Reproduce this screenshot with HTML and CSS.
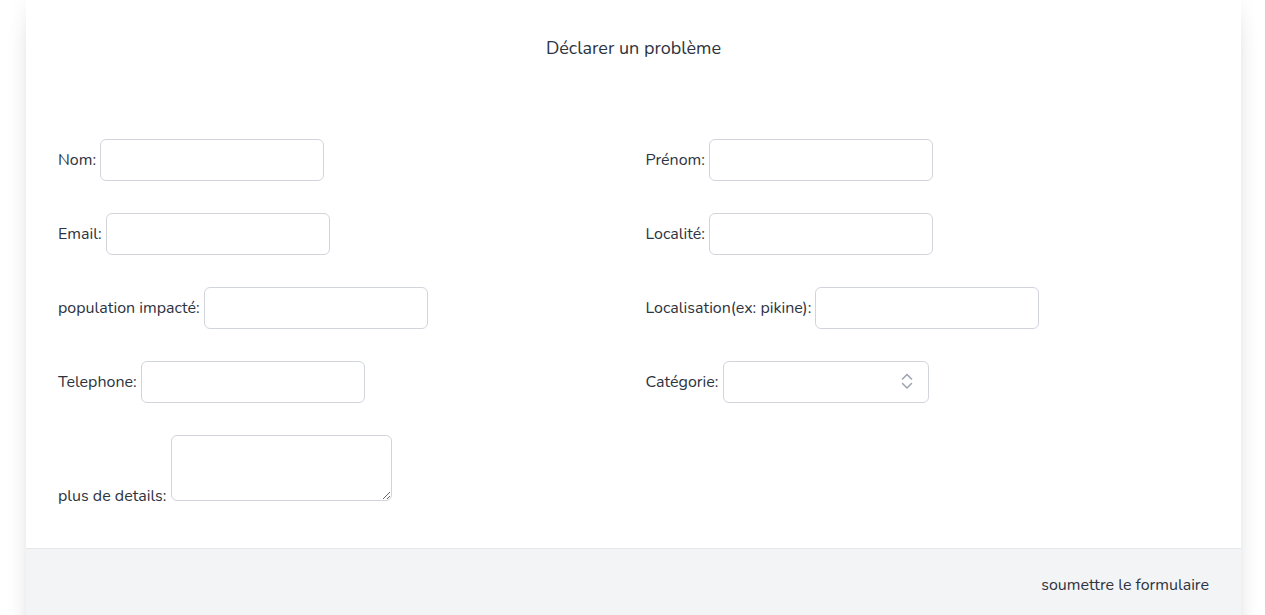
FILE: index.html
```html
<!DOCTYPE html>
<html lang="fr">
<head>
<meta charset="utf-8">
<link rel="stylesheet" href="styles.css">
</head>
<body>
<div class="card">
  <div class="card-body">
    <h1 class="title">Déclarer un problème</h1>
    <form class="form-grid">
      <div class="field"><label>Nom:</label> <input class="input" type="text"></div>
      <div class="field"><label>Prénom:</label> <input class="input" type="text"></div>
      <div class="field"><label>Email:</label> <input class="input" type="text"></div>
      <div class="field"><label>Localité:</label> <input class="input" type="text"></div>
      <div class="field"><label>population impacté:</label> <input class="input" type="text"></div>
      <div class="field"><label>Localisation(ex: pikine):</label> <input class="input" type="text"></div>
      <div class="field"><label>Telephone:</label> <input class="input" type="text"></div>
      <div class="field"><label>Catégorie:</label> <span class="select-wrap"><select class="select"><option></option></select><svg class="select-icon" width="20" height="20" viewBox="0 0 20 20" fill="none"><path d="M5.5 8l4.5-4.5 4.5 4.5M5.5 12.5l4.5 4.5 4.5-4.5" stroke="#9ca3af" stroke-width="1.5" stroke-linecap="round" stroke-linejoin="round"/></svg></span></div>
      <div class="field"><label>plus de details:</label> <textarea class="textarea"></textarea></div>
    </form>
  </div>
  <div class="card-footer">
    <span class="submit">soumettre le formulaire</span>
  </div>
</div>
</body>
</html>
```
FILE: styles.css
```css
* { box-sizing: border-box; }
html, body { margin: 0; padding: 0; background: #fff; }
body {
  font-family: "Nunito", "Noto Sans", sans-serif;
  font-size: 16px;
  color: #2d3340;
  overflow: hidden;
}
.card {
  margin: 0 24px 0 26px;
  background: #fff;
  box-shadow: 0 20px 25px -5px rgba(0,0,0,0.1), 0 10px 10px -5px rgba(0,0,0,0.04), 0 0 18px rgba(0,0,0,0.05);
}
.card-body {
  padding: 34px 32px 40px;
}
.title {
  margin: 0 0 77px;
  text-align: center;
  font-size: 18px;
  font-weight: 400;
  line-height: 28px;
  color: #2d3340;
}
.form-grid {
  display: grid;
  grid-template-columns: 1fr 1fr;
  column-gap: 24px;
  row-gap: 32px;
}
.field { line-height: 24px; }
.input, .select, .textarea {
  font: inherit;
  border: 1px solid #d1d5db;
  border-radius: 6px;
  background: #fff;
  vertical-align: baseline;
  outline: none;
}
.input { width: 224px; height: 42px; padding: 8px 12px; }
.select-wrap { position: relative; display: inline-block; }
.select {
  -webkit-appearance: none;
  appearance: none;
  width: 206px;
  height: 42px;
  padding: 8px 36px 8px 12px;
}
.select-icon {
  position: absolute;
  right: 12px;
  top: 10px;
  pointer-events: none;
}
.textarea {
  width: 221px;
  height: 66px;
  padding: 8px 12px;
  resize: vertical;
}
.card-footer {
  background: #f3f4f6;
  border-top: 1px solid #e5e7eb;
  padding: 24px 32px 40px;
  text-align: right;
}
.submit { line-height: 24px; }
```
